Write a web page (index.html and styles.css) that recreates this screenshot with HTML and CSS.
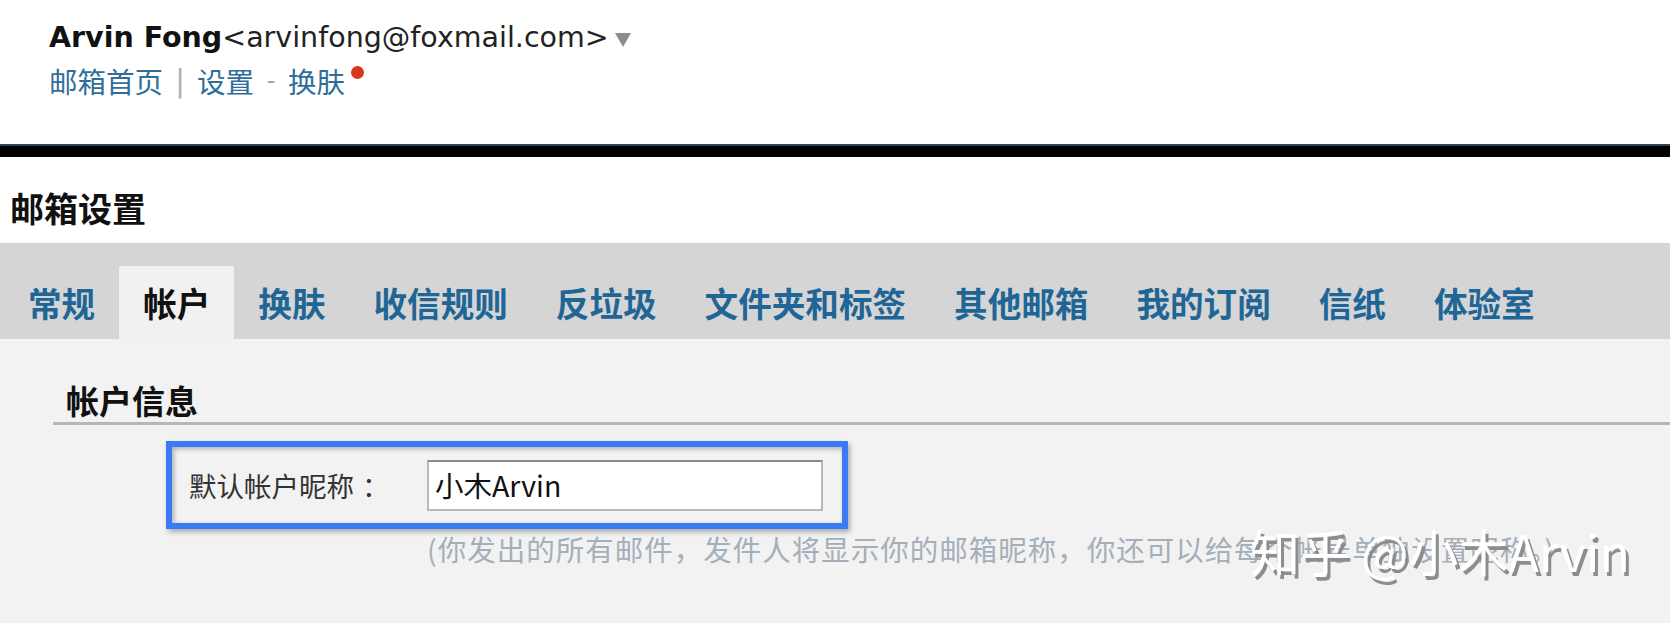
FILE: index.html
```html
<!DOCTYPE html>
<html lang="zh-CN">
<head>
<meta charset="utf-8">
<title>邮箱设置</title>
<link rel="stylesheet" href="styles.css">
</head>
<body>
<header class="top">
  <div class="user">
    <span class="name">Arvin Fong</span><span class="email">&lt;arvinfong@foxmail.com&gt;</span><svg class="caret" width="16" height="15" viewBox="0 0 16 15"><path d="M0 1 H16 L8 15 Z" fill="#8c8c8c"/></svg>
  </div>
  <div class="links">
    <a class="link">邮箱首页</a><span class="sep">|</span><a class="link">设置</a><span class="dash">-</span><a class="link skin">换肤<i class="dot"></i></a>
  </div>
</header>
<div class="blackbar"></div>
<h1 class="title">邮箱设置</h1>
<nav class="tabs">
  <a class="tab">常规</a>
  <a class="tab active">帐户</a>
  <a class="tab">换肤</a>
  <a class="tab">收信规则</a>
  <a class="tab">反垃圾</a>
  <a class="tab">文件夹和标签</a>
  <a class="tab">其他邮箱</a>
  <a class="tab">我的订阅</a>
  <a class="tab">信纸</a>
  <a class="tab">体验室</a>
</nav>
<main class="content">
  <h2 class="section">帐户信息</h2>
  <div class="highlight">
    <label class="label">默认帐户昵称<span class="colon">：</span></label>
    <div class="input">小木Arvin</div>
  </div>
  <p class="hint">(你发出的所有邮件，发件人将显示你的邮箱昵称，你还可以给每个帐号单独设置昵称。)</p>
  <div class="watermark">知乎 @小木Arvin</div>
</main>
</body>
</html>
```
FILE: styles.css
```css
* { box-sizing: border-box; }
html, body { margin: 0; padding: 0; }
body {
  width: 1670px;
  height: 623px;
  overflow: hidden;
  background: #fff;
  font-family: "DejaVu Sans", "Noto Sans CJK SC", sans-serif;
  color: #111;
}
.top {
  height: 144px;
  padding: 19px 0 0 49px;
}
.user {
  height: 38px;
  line-height: 38px;
  font-size: 28.5px;
  display: flex;
  align-items: center;
  white-space: nowrap;
}
.name { font-weight: bold; color: #111; }
.email { color: #222; }
.caret { margin-left: 6px; margin-top: 2px; }
.links {
  margin-top: 4px;
  height: 40px;
  line-height: 40px;
  font-size: 28.5px;
  font-family: "Noto Sans CJK SC", sans-serif;
  display: flex;
  align-items: center;
  white-space: nowrap;
}
.link { color: #2f6e9b; text-decoration: none; }
.sep, .dash {
  display: inline-block;
  width: 34px;
  text-align: center;
  color: #9aa6b0;
  font-family: "DejaVu Sans", sans-serif;
  font-size: 24px;
}
.sep { font-size: 30px; color: #a8b2ba; }
.skin { position: relative; }
.dot {
  position: absolute;
  right: -19px;
  top: 5px;
  width: 13px;
  height: 13px;
  border-radius: 50%;
  background: #d8361c;
}
.blackbar {
  height: 13px;
  background: #000;
  border-top: 2px solid #2b4656;
}
.title {
  margin: 0;
  height: 86px;
  padding: 31px 0 0 10px;
  line-height: 40px;
  font-size: 34px;
  font-weight: bold;
  font-family: "Noto Sans CJK SC", sans-serif;
  color: #111;
}
.tabs {
  height: 96px;
  background: #d5d5d5;
  padding-left: 4px;
  display: flex;
  align-items: flex-end;
}
.tab {
  height: 73px;
  line-height: 73px;
  padding: 0 24px;
  font-size: 33.6px;
  font-weight: bold;
  font-family: "Noto Sans CJK SC", sans-serif;
  color: #1f6696;
  white-space: nowrap;
}
.tab.active {
  background: #f1f1f1;
  color: #111;
}
.content {
  position: relative;
  height: 284px;
  background: #f2f2f2;
  padding-top: 41px;
  font-family: "Noto Sans CJK SC", sans-serif;
}
.section {
  margin: 0 0 0 53px;
  padding: 0 0 2px 13px;
  line-height: 40px;
  font-size: 33px;
  font-weight: bold;
  color: #111;
  border-bottom: 3px solid #b6b6b6;
}
.highlight {
  margin: 16px 0 0 166px;
  width: 682px;
  height: 88px;
  border: 6px solid #3a7af5;
  display: flex;
  align-items: center;
  padding-left: 17px;
  box-shadow: 2px 3px 5px rgba(0,0,0,0.3), inset 2px 2px 5px rgba(0,0,0,0.28);
}
.label {
  width: 238px;
  font-size: 27.5px;
  color: #333;
  white-space: nowrap;
}
.colon { margin-left: 8px; }
.input {
  width: 396px;
  height: 51px;
  background: #fff;
  border: 2px solid #b8b8b8;
  border-top-color: #8c8c8c;
  padding-left: 6px;
  line-height: 45px;
  font-size: 28.5px;
  color: #111;
  font-family: "Noto Sans CJK SC", "DejaVu Sans", sans-serif;
  white-space: nowrap;
}
.hint {
  margin: 5px 0 0 427px;
  line-height: 30px;
  font-size: 28.5px;
  letter-spacing: 1px;
  color: #a4afba;
  white-space: nowrap;
}
.watermark {
  position: absolute;
  left: 1250px;
  top: 186px;
  font-size: 50px;
  line-height: 1;
  color: #fff;
  text-shadow: 3px 4px 0 #8d8d8d;
  white-space: nowrap;
  font-family: "Noto Sans CJK SC", sans-serif;
}
```
